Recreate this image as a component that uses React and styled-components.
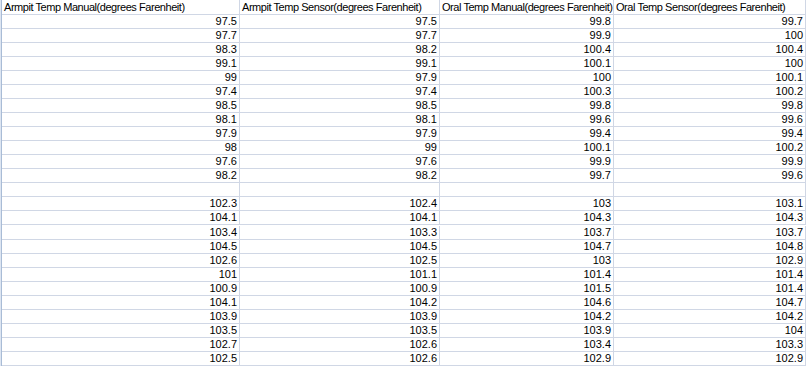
import React from "react";
import styled, { createGlobalStyle } from "styled-components";

const Global = createGlobalStyle`
  html, body { margin: 0; padding: 0; background: #ffffff; }
  body { overflow: hidden; }
`;

const Sheet = styled.div`
  display: grid;
  grid-template-columns: 238px 200px 174px 192px;
  width: 806px;
  height: 366px;
  overflow: hidden;
  border-left: 1px solid #dde5f1;
  box-shadow: inset 1px 0 0 #a9bcd6;
  padding-left: 1px;
  box-sizing: border-box;
  font-family: "Liberation Sans", Arial, sans-serif;
  font-size: 11px;
  color: #000;
`;

const Cell = styled.div`
  box-sizing: border-box;
  height: ${(p) => (p.$header ? 15 : 14)}px;
  border-right: 1px solid #d0d7e5;
  border-bottom: 1px solid #d0d7e5;
  padding: ${(p) => (p.$header ? 1 : 0)}px 2px 0 2px;
  line-height: 13px;
  white-space: nowrap;
  overflow: hidden;
  text-align: ${(p) => (p.$header ? "left" : "right")};
  letter-spacing: ${(p) => (p.$header ? "-0.45px" : "0")};
`;

const headers = [
  "Armpit Temp Manual(degrees Farenheit)",
  "Armpit Temp Sensor(degrees Farenheit)",
  "Oral Temp Manual(degrees Farenheit)",
  "Oral Temp Sensor(degrees Farenheit)",
];

const cols = [
  ["97.5","97.7","98.3","99.1","99","97.4","98.5","98.1","97.9","98","97.6","98.2","","102.3","104.1","103.4","104.5","102.6","101","100.9","104.1","103.9","103.5","102.7","102.5"],
  ["97.5","97.7","98.2","99.1","97.9","97.4","98.5","98.1","97.9","99","97.6","98.2","","102.4","104.1","103.3","104.5","102.5","101.1","100.9","104.2","103.9","103.5","102.6","102.6"],
  ["99.8","99.9","100.4","100.1","100","100.3","99.8","99.6","99.4","100.1","99.9","99.7","","103","104.3","103.7","104.7","103","101.4","101.5","104.6","104.2","103.9","103.4","102.9"],
  ["99.7","100","100.4","100","100.1","100.2","99.8","99.6","99.4","100.2","99.9","99.6","","103.1","104.3","103.7","104.8","102.9","101.4","101.4","104.7","104.2","104","103.3","102.9"],
];

export default function App() {
  const rows = cols[0].map((_, r) => cols.map((c) => c[r]));
  return (
    <>
      <Global />
      <Sheet>
        {headers.map((h) => (
          <Cell key={h} $header>
            {h}
          </Cell>
        ))}
        {rows.map((row, r) =>
          row.map((v, c) => <Cell key={`${r}-${c}`}>{v}</Cell>)
        )}
      </Sheet>
    </>
  );
}
